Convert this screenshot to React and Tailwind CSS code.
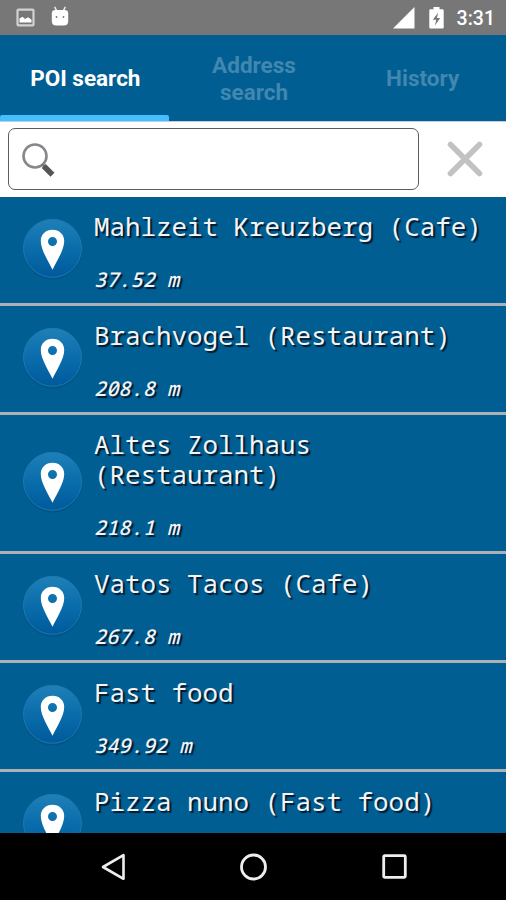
import React, { useState } from 'react';

const PLACES = [
    { id: 1, lines: ['Mahlzeit Kreuzberg (Cafe)'], distance: '37.52 m' },
    { id: 2, lines: ['Brachvogel (Restaurant)'], distance: '208.8 m' },
    { id: 3, lines: ['Altes Zollhaus', '(Restaurant)'], distance: '218.1 m' },
    { id: 4, lines: ['Vatos Tacos (Cafe)'], distance: '267.8 m' },
    { id: 5, lines: ['Fast food'], distance: '349.92 m' },
    { id: 6, lines: ['Pizza nuno (Fast food)'], distance: '' },
];

const TABS = ['POI search', 'Address search', 'History'];

const StatusBar = () => (
    <div className="flex h-[35px] shrink-0 items-center justify-between bg-[#777777] pr-[11px] pl-4 text-white">
        <div className="flex items-center gap-4">
            <svg width="19" height="19" viewBox="0 0 19 19">
                <rect x="1.5" y="1.6" width="16" height="15.8" rx="1" fill="none" stroke="#d2d2d2" strokeWidth="2.2" />
                <path d="M3.5 14.5v-4l3-1.8 2.5 2.2 3.2-1.6 3.3 2.5v2.7z" fill="#fff" />
            </svg>
            <svg width="18" height="20" viewBox="0 0 18 20" className="-mt-[3px]">
                <path d="M3.6 0.8l2 3.8M14.4 0.8l-2 3.8" stroke="#eee" strokeWidth="1.4" />
                <path d="M0.8 7.2Q0.8 4 4.5 4h9Q17.2 4 17.2 7.2V15q0 4.5-4.5 4.5h-7.4Q0.8 19.5 0.8 15z" fill="#fff" />
                <circle cx="5.5" cy="11" r="0.9" fill="#777" />
                <circle cx="12.5" cy="11" r="0.9" fill="#777" />
            </svg>
        </div>
        <div className="flex items-center">
            <svg width="22" height="22" viewBox="0 0 22 22">
                <path d="M21.5 0v21.5H0z" fill="#fff" />
            </svg>
            <svg width="15" height="22" viewBox="0 0 15 22" className="ml-[14px]">
                <path d="M4.5 0h6v2.3h3q1.2 0 1.2 1.2v17q0 1-1.2 1H1.5q-1.2 0-1.2-1v-17q0-1.2 1.2-1.2h3z" fill="#fff" />
                <path d="M9.2 5.5L3.8 12.7h3.4L6 18.5l5.2-7.4H7.9z" fill="#777" />
            </svg>
            <span className="ml-[13px] pt-0.5 text-[19.5px] leading-6 font-medium">3:31</span>
        </div>
    </div>
);

const TabBar = ({ active, onSelect }) => (
    <div className="grid h-[86px] shrink-0 grid-cols-3 bg-[#005e92]">
        {TABS.map((tab) => (
            <button
                key={tab}
                onClick={() => onSelect(tab)}
                className={
                    tab === active
                        ? 'flex min-w-0 flex-col text-white'
                        : 'flex min-w-0 flex-col text-[#4187b0]'
                }
            >
                <span className="flex flex-1 items-center justify-center self-stretch pt-[7px] pl-[2px] text-center text-[22.5px] leading-[27px] font-bold whitespace-nowrap">
                    {tab === 'Address search' ? <span>Address<br />search</span> : tab}
                </span>
                <span className={tab === active ? 'h-1.5 self-stretch rounded-t-[2px] bg-[#41bfff]' : 'h-1.5'} />
            </button>
        ))}
    </div>
);

const SearchBar = () => {
    const [query, setQuery] = useState('');

    return (
        <div className="flex h-[76px] shrink-0 items-center border-t border-[#c9cbe0] bg-white pb-[2px] pl-2">
            <div className="flex h-[62px] w-[411px] items-center rounded-[7px] border-[1.5px] border-[#5c5c5c] pl-[13px]">
                <svg width="34" height="36" viewBox="0 0 34 36" className="shrink-0">
                    <circle cx="13" cy="15" r="11.5" fill="none" stroke="#85888b" strokeWidth="2.6" />
                    <path d="M20.3 23.2l2.4 2.4" stroke="#777" strokeWidth="2.5" />
                    <path d="M21.7 25l8.8 8.8" stroke="#555" strokeWidth="5.6" />
                </svg>
                <input
                    value={query}
                    onChange={(e) => setQuery(e.target.value)}
                    className="ml-2 min-w-0 flex-1 text-xl text-black outline-none"
                />
            </div>
            <button onClick={() => setQuery('')} className="ml-[28px]">
                <svg width="36" height="36" viewBox="0 0 36 36">
                    <path d="M3.5 3.5l29 29M32.5 3.5l-29 29" stroke="#c2c2c2" strokeWidth="5.6" strokeLinecap="round" />
                </svg>
            </button>
        </div>
    );
};

const PinIcon = () => (
    <svg width="62" height="64" viewBox="0 0 62 64" className="-mt-[3px] shrink-0">
        <defs>
            <linearGradient id="disc" x1="0" y1="0" x2="0" y2="1">
                <stop offset="0" stopColor="#1f80b8" />
                <stop offset="0.5" stopColor="#0a6dab" />
                <stop offset="1" stopColor="#005a9c" />
            </linearGradient>
        </defs>
        <circle cx="31.5" cy="33" r="29.5" fill="#004f80" opacity="0.6" />
        <circle cx="31.5" cy="31.3" r="29" fill="url(#disc)" stroke="#1f78ae" strokeWidth="1" />
        <path
            fillRule="evenodd"
            d="M31.5 12.8c-6.8 0-11.7 4.7-11.7 11.2 0 9 7.3 19.5 11.7 28.8 4.4-9.3 11.7-19.8 11.7-28.8 0-6.5-4.9-11.2-11.7-11.2zm0 7.2a4.5 4.5 0 1 1 0 9 4.5 4.5 0 0 1 0-9z"
            fill="#fff"
        />
    </svg>
);

const PlaceRow = ({ place }) => (
    <li className="flex shrink-0 items-center border-b-3 border-[#adb0b4] pl-[21px]">
        <PinIcon />
        <div className="pt-[14px] pb-3 pl-[11px] font-['Noto_Sans_Mono','DejaVu_Sans_Mono',monospace] whitespace-nowrap text-[#f4f4f4] [text-shadow:2px_2px_1px_#001a30]">
            {place.lines.map((line) => (
                <p key={line} className="text-[25.85px] leading-[30px]">{line}</p>
            ))}
            <p className="mt-[26px] h-6 text-[20.3px] leading-6 font-medium italic">{place.distance}</p>
        </div>
    </li>
);

const NavBar = () => (
    <div className="flex h-[67px] shrink-0 items-center justify-between bg-black pr-[99px] pl-[100px]">
        <svg width="26" height="28" viewBox="0 0 26 28">
            <path d="M23.5 2.2v23.6L3 14z" fill="none" stroke="#eee" strokeWidth="2.6" strokeLinejoin="round" />
        </svg>
        <svg width="28" height="28" viewBox="0 0 28 28">
            <circle cx="13.5" cy="14" r="12" fill="none" stroke="#eee" strokeWidth="2.8" />
        </svg>
        <svg width="25" height="25" viewBox="0 0 25 25">
            <rect x="1.7" y="1.7" width="21.6" height="21.6" rx="1" fill="none" stroke="#eee" strokeWidth="2.8" />
        </svg>
    </div>
);

export default function App() {
    const [active, setActive] = useState('POI search');

    return (
        <div className="flex h-[900px] w-[506px] flex-col overflow-hidden bg-[#005e92] font-[Roboto,sans-serif]">
            <StatusBar />
            <TabBar active={active} onSelect={setActive} />
            <SearchBar />
            <ul className="flex min-h-0 flex-1 flex-col overflow-hidden">
                {PLACES.map((place) => (
                    <PlaceRow key={place.id} place={place} />
                ))}
            </ul>
            <NavBar />
        </div>
    );
}
